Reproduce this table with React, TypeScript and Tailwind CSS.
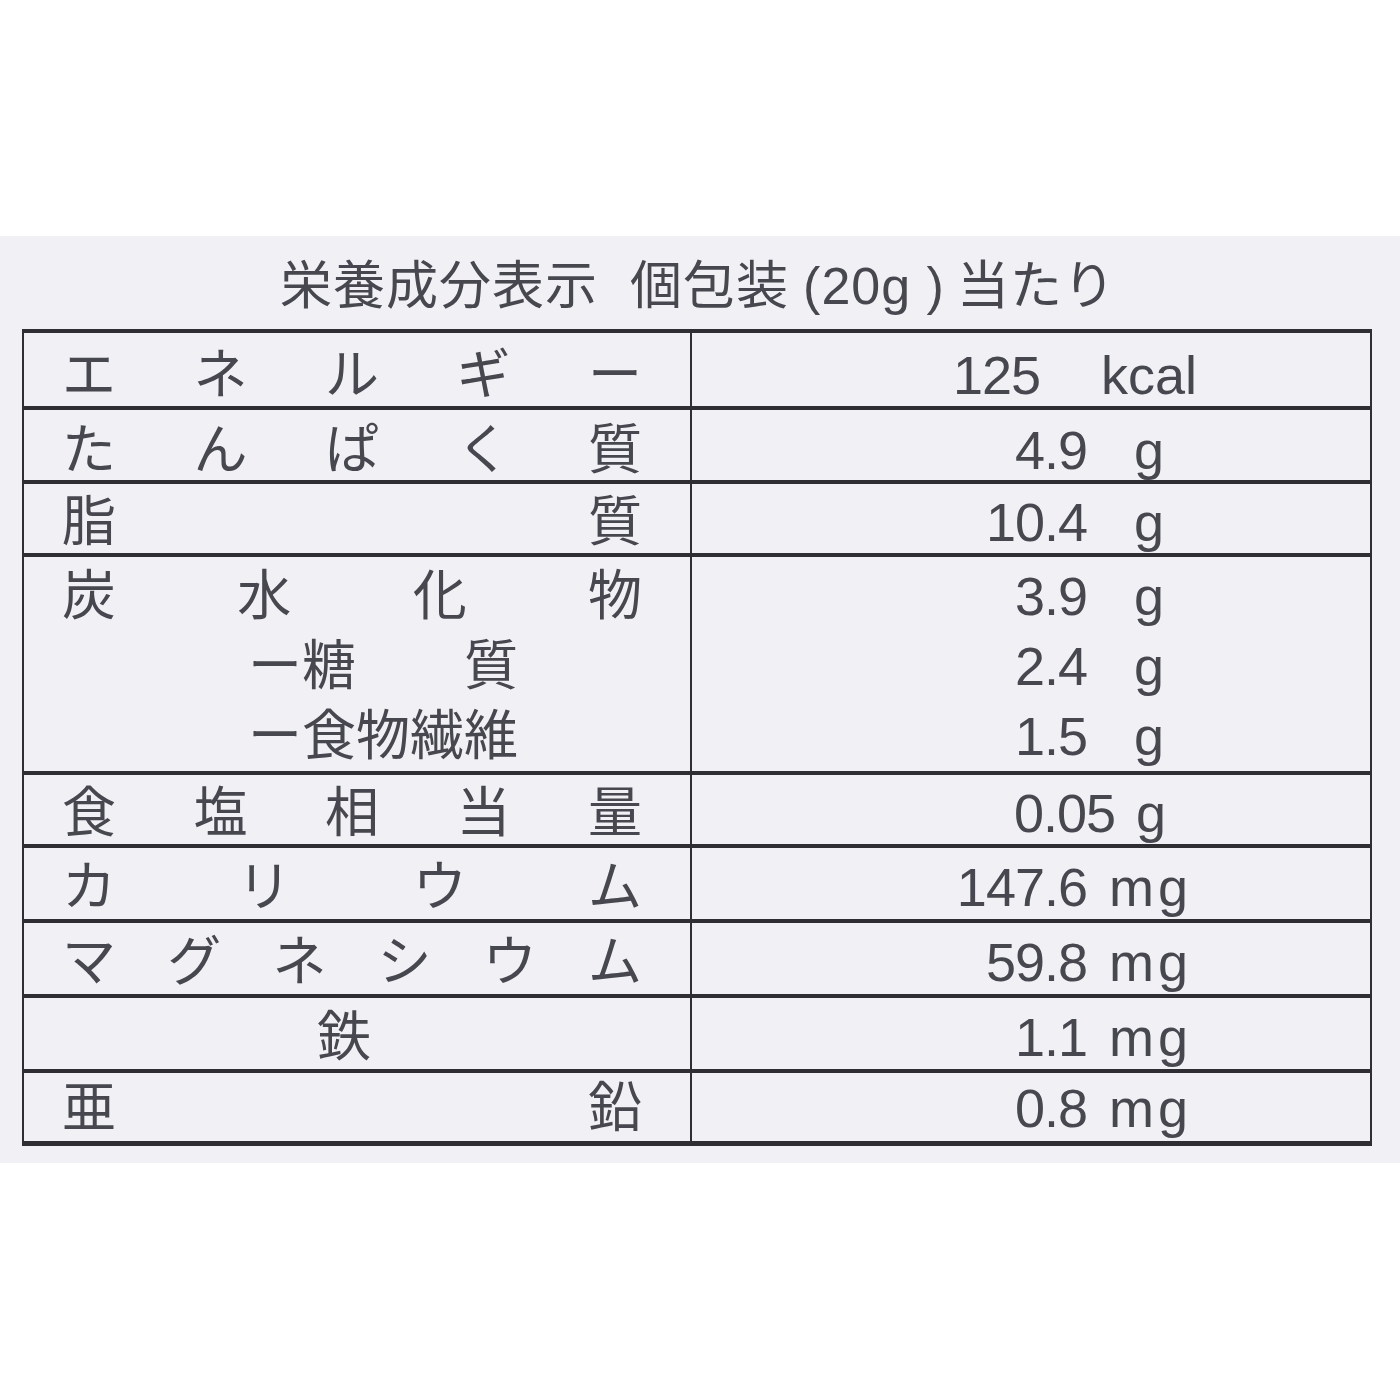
import React from 'react';

type Value = {
  num: string;
  unit: string;
  numW: number;
  gap: number;
};

type Row = {
  h: string;
  pt: string;
  lines: { chars: string[]; indent?: boolean }[];
  values: Value[];
};

const g = (num: string): Value => ({ num, unit: 'g', numW: 395, gap: 47 });
const mg = (num: string): Value => ({ num, unit: 'mg', numW: 395, gap: 22 });

const rows: Row[] = [
  {
    h: 'h-[77px]',
    pt: 'pt-[10px]',
    lines: [{ chars: ['エ', 'ネ', 'ル', 'ギ', 'ー'] }],
    values: [{ num: '125', unit: 'kcal', numW: 348, gap: 61 }],
  },
  { h: 'h-[74px]', pt: 'pt-[9px]', lines: [{ chars: ['た', 'ん', 'ぱ', 'く', '質'] }], values: [g('4.9')] },
  { h: 'h-[73px]', pt: 'pt-[7px]', lines: [{ chars: ['脂', '質'] }], values: [g('10.4')] },
  {
    h: 'h-[218px]',
    pt: 'pt-[4px]',
    lines: [
      { chars: ['炭', '水', '化', '物'] },
      { chars: ['ー糖　　質'], indent: true },
      { chars: ['ー食物繊維'], indent: true },
    ],
    values: [g('3.9'), g('2.4'), g('1.5')],
  },
  {
    h: 'h-[73px]',
    pt: 'pt-[7px]',
    lines: [{ chars: ['食', '塩', '相', '当', '量'] }],
    values: [{ num: '0.05', unit: 'g', numW: 423, gap: 21 }],
  },
  { h: 'h-[75px]', pt: 'pt-[6px]', lines: [{ chars: ['カ', 'リ', 'ウ', 'ム'] }], values: [mg('147.6')] },
  { h: 'h-[75px]', pt: 'pt-[6px]', lines: [{ chars: ['マ', 'グ', 'ネ', 'シ', 'ウ', 'ム'] }], values: [mg('59.8')] },
  { h: 'h-[75px]', pt: 'pt-[6px]', lines: [{ chars: ['鉄'] }], values: [mg('1.1')] },
  { h: 'h-[68px]', pt: 'pt-[2px]', lines: [{ chars: ['亜', '鉛'] }], values: [mg('0.8')] },
];

const App: React.FC = () => {
  return (
    <div className="w-[1400px] h-[1400px] bg-white text-[#47474f] font-['Liberation_Sans','Noto_Sans_CJK_JP',sans-serif]">
      <div className="h-[236px]" />
      <div className="h-[927px] bg-[#f0f0f5] pt-[24px] px-[22px]">
        <h1 className="text-center text-[52px] leading-none tracking-[1px] mb-[17px] pr-[4px]">
          栄養成分表示<span className="ml-[32px]">個包装</span>
          <span className="ml-[14px]">(20g )</span>
          <span className="ml-[12px]">当たり</span>
        </h1>

        <div className="w-[1350px] border-t-4 border-b-[5px] border-l-2 border-r-2 border-[#2e2e33]">
          {rows.map((row, idx) => (
            <div
              key={idx}
              className={`flex ${row.h} ${idx < rows.length - 1 ? 'border-b-4 border-[#2e2e33]' : ''}`}
            >
              {/* label column */}
              <div className={`w-[666px] pl-[38px] pr-[48px] ${row.pt} flex flex-col`}>
                {row.lines.map((line, i) => (
                  <div
                    key={i}
                    className={`h-[72px] flex items-center text-[54px] leading-none ${
                      line.indent
                        ? 'pl-[186px]'
                        : line.chars.length === 1
                        ? 'justify-center pr-[16px]'
                        : 'justify-between'
                    }`}
                  >
                    {line.chars.map((c, j) => (
                      <span key={j}>{c}</span>
                    ))}
                  </div>
                ))}
              </div>

              {/* value column */}
              <div className={`flex-1 border-l-2 border-[#2e2e33] ${row.pt} flex flex-col`}>
                {row.values.map((v, i) => (
                  <div key={i} className="h-[72px] flex items-center text-[54px] leading-none">
                    <span className="text-right tracking-[-1px]" style={{ width: v.numW }}>
                      {v.num}
                    </span>
                    <span
                      className={v.unit === 'mg' ? 'tracking-[4px]' : ''}
                      style={{ marginLeft: v.gap }}
                    >
                      {v.unit}
                    </span>
                  </div>
                ))}
              </div>
            </div>
          ))}
        </div>
      </div>
    </div>
  );
};

export default App;
